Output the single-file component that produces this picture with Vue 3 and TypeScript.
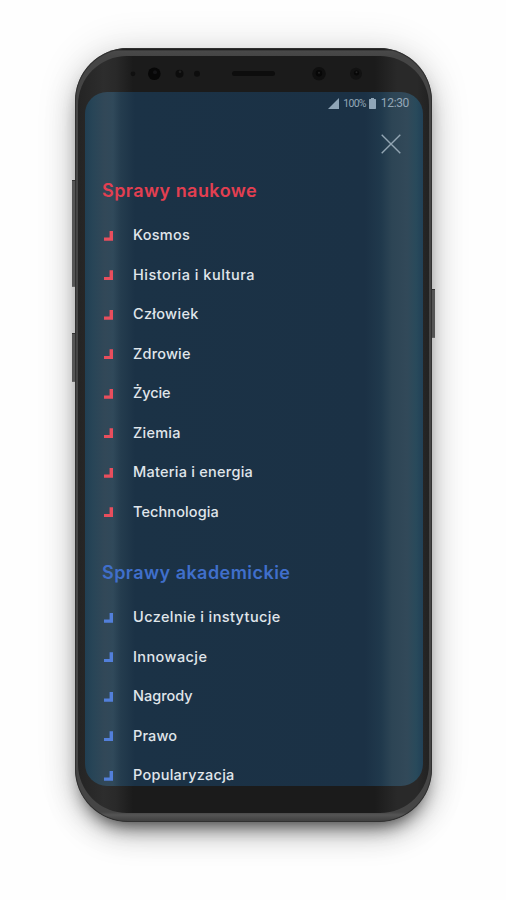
<script setup lang="ts">
interface Topic {
  label: string
  spacing: number
}
interface Section {
  title: string
  tone: 'red' | 'blue'
  topics: Topic[]
}

const sections: Section[] = [
  {
    title: 'Sprawy naukowe',
    tone: 'red',
    topics: [
      { label: 'Kosmos', spacing: 0.3 },
      { label: 'Historia i kultura', spacing: 0.5 },
      { label: 'Człowiek', spacing: 0.3 },
      { label: 'Zdrowie', spacing: 0.2 },
      { label: 'Życie', spacing: -0.1 },
      { label: 'Ziemia', spacing: 0.25 },
      { label: 'Materia i energia', spacing: 0.25 },
      { label: 'Technologia', spacing: 0.1 },
    ],
  },
  {
    title: 'Sprawy akademickie',
    tone: 'blue',
    topics: [
      { label: 'Uczelnie i instytucje', spacing: 0.4 },
      { label: 'Innowacje', spacing: 0.4 },
      { label: 'Nagrody', spacing: 0 },
      { label: 'Prawo', spacing: 0.1 },
      { label: 'Popularyzacja', spacing: 0.25 },
    ],
  },
]
</script>

<template>
  <main class="stage">
    <div class="phone">
      <i class="key volume"></i>
      <i class="key assistant"></i>
      <i class="key power"></i>
      <div class="face">
        <svg class="sensors" viewBox="0 0 351 36" aria-hidden="true">
          <g transform="translate(1 1.3)">
            <circle cx="54" cy="16.500" r="2.400" fill="#101010" />
            <circle cx="75.300" cy="16.500" r="6.300" fill="#070707" />
            <circle cx="76" cy="15" r="2" fill="#141416" />
            <circle cx="100.500" cy="16.500" r="4" fill="#0c0c0c" />
            <circle cx="101" cy="14.500" r="1.300" fill="#202020" />
            <circle cx="118" cy="16.500" r="3" fill="#0d0d0d" />
            <rect x="153" y="13.700" width="43" height="5" rx="2.500" fill="#0d0d0d" />
            <circle cx="240" cy="16.500" r="6.800" fill="#0f0f0f" />
            <circle cx="240" cy="16" r="3.200" fill="#070707" />
            <circle cx="240" cy="15.500" r="1" fill="#242424" />
            <circle cx="277" cy="16.500" r="6" fill="#121212" />
            <circle cx="277.500" cy="15.500" r="2.600" fill="#080808" />
            <circle cx="277.500" cy="15" r="1" fill="#242424" />
          </g>
        </svg>
        <div class="screen">
          <header class="status">
            <svg class="signal" viewBox="0 0 11 11"><path d="M0 11L11 0V11Z" /></svg>
            <span class="percent">100%</span>
            <svg class="battery" viewBox="0 0 7 11"><path d="M2 0h3v1h1.500l.5.5V10.500l-.5.5h-6L0 10.500V1.500L.5 1H2Z" /></svg>
            <span class="clock">12:30</span>
          </header>
          <div class="toolbar">
            <svg class="close" viewBox="0 0 20 20"><path d="M.7.700L19.300 19.300M19.300.7L.7 19.300" /></svg>
          </div>
          <nav>
            <section v-for="section in sections" :key="section.title" :class="section.tone">
              <h2>{{ section.title }}</h2>
              <ul>
                <li v-for="topic in section.topics" :key="topic.label">
                  <i class="corner"></i>
                  <span :style="{ letterSpacing: topic.spacing + 'px' }">{{ topic.label }}</span>
                </li>
              </ul>
            </section>
          </nav>
        </div>
      </div>
    </div>
  </main>
</template>

<style>
body {
  margin: 0;
  background: #fff;
}
</style>

<style scoped>
.stage {
  box-sizing: border-box;
  width: 506px;
  height: 900px;
  padding: 48px 74px 0 75px;
  overflow: hidden;
  background: #fefefe;
  font-family: Inter, "Liberation Sans", sans-serif;
}
.phone {
  position: relative;
  box-sizing: border-box;
  width: 357px;
  height: 774px;
  padding: 8px 3px 9px;
  border-radius: 53px;
  background: linear-gradient(#111 0, #111 1px, #494949 3px, #454545 8px, #454545 764px, #555 767px, #3c3c3c 774px);
  box-shadow:
    inset 0 0 0 1px #303030,
    0 12px 17px -8px rgba(0, 0, 0, 0.65),
    0 14px 32px -2px rgba(0, 0, 0, 0.22),
    0 0 42px rgba(0, 0, 0, 0.12);
}
.key {
  position: absolute;
  width: 3px;
  background: #555;
  box-shadow: inset 0 1px #333, inset 0 -1px #666;
}
.volume { left: -3px; top: 132px; height: 107px; }
.assistant { left: -3px; top: 285px; height: 49px; }
.power { right: -3px; top: 241px; height: 49px; }
.face {
  box-sizing: border-box;
  width: 351px;
  height: 757px;
  padding: 0 6.500px 0 7px;
  border-radius: 49px;
  background: linear-gradient(90deg, #242424 0, #2d2d2d 26px, #292929 38px, #1b1b1b 55px, #1b1b1b 297px, #292929 319px, #292929 339px, #222 351px);
}
.sensors {
  display: block;
  width: 351px;
  height: 36px;
  margin-left: -7px;
}
.screen {
  display: flex;
  flex-direction: column;
  height: 694px;
  border-radius: 22px;
  overflow: hidden;
  background: linear-gradient(90deg, #203f53 0, #284557 8px, #324858 20px, #30495a 28px, #243c4e 36px, #1b3246 50px, #1b3145 280px, #20394c 296px, #2d4555 307px, #324959 322px, #294a5b 331px, #214157 100%);
}
.status {
  display: flex;
  align-items: center;
  justify-content: flex-end;
  height: 14px;
  padding: 4px 13.500px 0 0;
  color: #94a7b7;
  font-family: Roboto, sans-serif;
}
.status svg { fill: #8fa5b7; }
.signal { width: 11px; height: 11px; margin-right: 4px; }
.percent { font-size: 10.500px; letter-spacing: -0.7px; margin-right: 3.500px; }
.battery { width: 7px; height: 11px; margin-right: 4.500px; }
.clock { font-size: 12px; letter-spacing: -0.350px; }
.toolbar {
  display: flex;
  justify-content: flex-end;
  padding: 23.500px 21.500px 0 0;
}
.close {
  width: 20px;
  height: 20px;
  fill: none;
  stroke: #93a6b3;
  stroke-width: 1.400;
}
nav { padding: 22px 17px 0; }
h2 {
  margin: 0;
  height: 39.500px;
  line-height: 29px;
  font-size: 18px;
  font-weight: 600;
  letter-spacing: 0.450px;
  white-space: nowrap;
}
ul {
  margin: 0;
  padding: 0 0 26.500px;
  list-style: none;
}
li {
  display: grid;
  grid-template-columns: 11px auto;
  column-gap: 20px;
  align-items: center;
  height: 39.500px;
  color: #e0e6eb;
  font-size: 14.500px;
  font-weight: 500;
  white-space: nowrap;
}
.red h2 { color: #e33f51; }
.blue h2 { color: #406fcb; }
.corner {
  width: 9px;
  height: 10px;
  margin: 2px 0 0 2px;
  background: #e94e5d;
  clip-path: polygon(62% 0, 100% 0, 100% 100%, 0 100%, 0 67%, 62% 67%);
}
.blue .corner { background: #527fda; }
</style>
